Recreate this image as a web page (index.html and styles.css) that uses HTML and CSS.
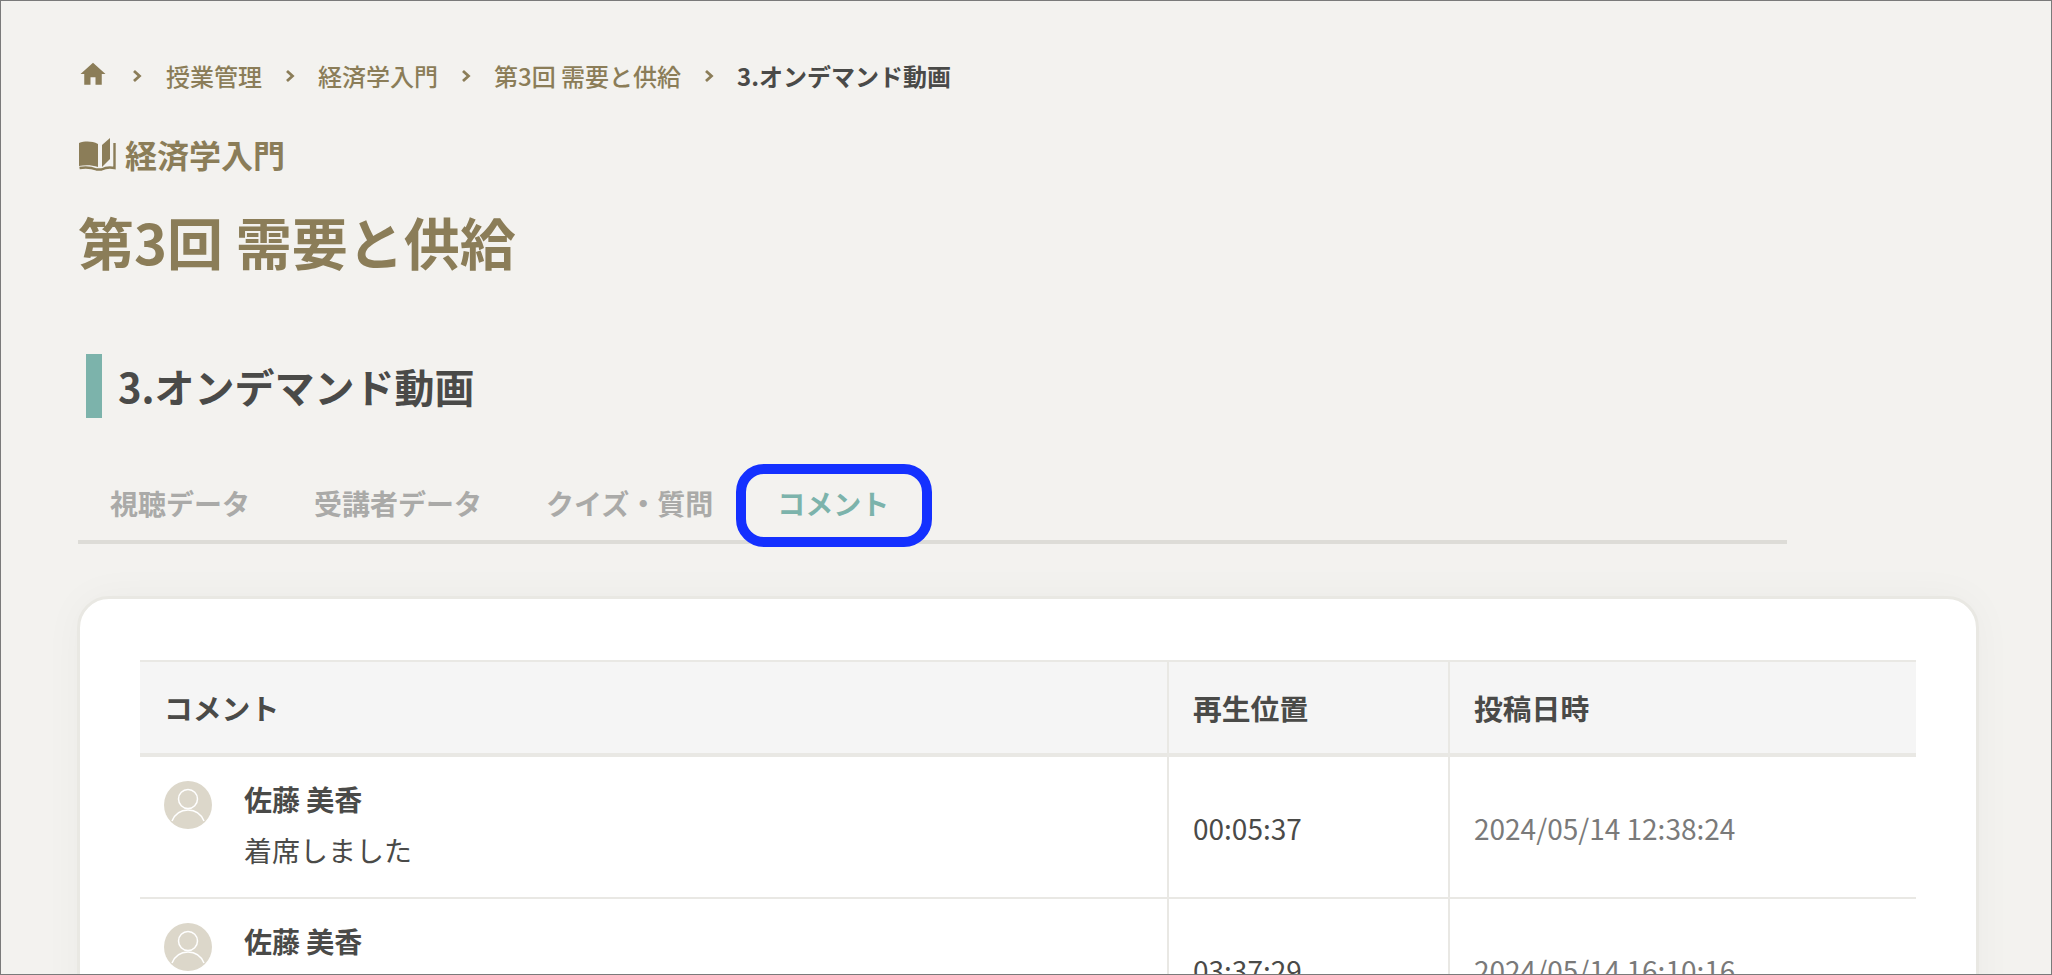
FILE: index.html
```html
<!DOCTYPE html>
<html lang="ja">
<head>
  <meta charset="utf-8">
  <title>3.オンデマンド動画 — コメント</title>
  <link rel="stylesheet" href="styles.css">
</head>

<body>
  <div class="page">
    <nav class="crumbs">
      <svg class="crumbs-home" viewBox="0 0 24 24"><path d="M10 20.500v-6h4v6h5v-8.500h3L12 3 2 12h3v8.500z"/></svg>
      <svg class="crumbs-sep crumbs-sep-first" viewBox="0 0 10 14"><path d="M2 2l5.500 5L2 12"/></svg>
      <a>授業管理</a>
      <svg class="crumbs-sep" viewBox="0 0 10 14"><path d="M2 2l5.500 5L2 12"/></svg>
      <a>経済学入門</a>
      <svg class="crumbs-sep" viewBox="0 0 10 14"><path d="M2 2l5.500 5L2 12"/></svg>
      <a>第3回 需要と供給</a>
      <svg class="crumbs-sep" viewBox="0 0 10 14"><path d="M2 2l5.500 5L2 12"/></svg>
      <span class="crumbs-current">3.オンデマンド動画</span>
    </nav>

    <div class="course">
      <svg class="course-icon" viewBox="0 0 38 34">
        <path d="M1 6c6-2 13-2 19 1v23c-6-2-13-2-19-1z"/>
        <path d="M24 8l8-7v21l-8 8z"/>
        <path class="course-icon-page" d="M36.500 6v25c-5-1-9-.500-13 1.500h-5c-5-2-11-2.500-17-1.500"/>
      </svg>
      <span>経済学入門</span>
    </div>
    <h1 class="lesson-title">第3回 需要と供給</h1>
    <h2 class="section-title">3.オンデマンド動画</h2>

    <ul class="tabs">
      <li>視聴データ</li>
      <li>受講者データ</li>
      <li>クイズ・質問</li>
      <li class="tab-active">コメント</li>
    </ul>

    <section class="card">
      <table class="comments">
        <thead>
          <tr>
            <th class="col-comment">コメント</th>
            <th class="col-pos">再生位置</th>
            <th class="col-date">投稿日時</th>
          </tr>
        </thead>
        <tbody>
          <tr>
            <td>
              <div class="comment">
                <svg class="avatar" viewBox="0 0 48 48"><circle cx="24" cy="24" r="24" class="avatar-bg"/><circle cx="24" cy="18" r="9.500"/><path d="M8 40c3-7 9-11 16-11s13 4 16 11"/></svg>
                <div>
                  <div class="comment-name">佐藤 美香</div>
                  <div class="comment-text">着席しました</div>
                </div>
              </div>
            </td>
            <td class="time">00:05:37</td>
            <td class="time date">2024/05/14 12:38:24</td>
          </tr>
          <tr>
            <td>
              <div class="comment">
                <svg class="avatar" viewBox="0 0 48 48"><circle cx="24" cy="24" r="24" class="avatar-bg"/><circle cx="24" cy="18" r="9.500"/><path d="M8 40c3-7 9-11 16-11s13 4 16 11"/></svg>
                <div>
                  <div class="comment-name">佐藤 美香</div>
                  <div class="comment-text">着席しました</div>
                </div>
              </div>
            </td>
            <td class="time">03:37:29</td>
            <td class="time date">2024/05/14 16:10:16</td>
          </tr>
        </tbody>
      </table>
    </section>
  </div>
</body>

</html>
```

FILE: styles.css
```css
html, body {
  margin: 0;
  height: 100%;
  overflow: hidden;
}

body {
  font-family: "Noto Sans CJK JP", "Noto Sans", sans-serif;
  color: #4a4a48;
  background: #f3f2ef;
}

.page {
  box-sizing: border-box;
  height: 975px;
  padding: 56px 74px 0 77px;
  border: 1px solid #7a7a7a;
  overflow: hidden;
}

.crumbs {
  display: flex;
  align-items: center;
  height: 36px;
  font-size: 24px;
  font-weight: 500;
  color: #8b7d58;
}

.crumbs-home {
  width: 30px;
  height: 30px;
  margin-top: -3px;
  fill: #8b7d58;
}

.crumbs-sep {
  width: 10px;
  height: 14px;
  margin: 2px 23px 0 23px;
  fill: none;
  stroke: #8b7d58;
  stroke-width: 2.800;
}

.crumbs-sep-first {
  margin: 2px 24px 0 24px;
}

.crumbs-current {
  font-weight: 700;
  color: #4a4a48;
}

.course {
  display: flex;
  align-items: center;
  gap: 9px;
  margin-top: 38px;
  font-size: 32px;
  font-weight: 700;
  line-height: 46px;
  color: #8b7d58;
}

.course-icon {
  width: 38px;
  height: 34px;
  fill: #8b7d58;
}

.course-icon-page {
  fill: none;
  stroke: #8b7d58;
  stroke-width: 2.400;
}

.lesson-title {
  margin: 24px 0 0;
  font-size: 56px;
  font-weight: 700;
  line-height: 80px;
  color: #8b7d58;
}

.section-title {
  margin: 73px 0 0 8px;
  padding-left: 16px;
  border-left: 16px solid #7cb3ab;
  font-size: 40px;
  font-weight: 700;
  line-height: 64px;
  color: #4a4a48;
}

.tabs {
  display: flex;
  width: 1709px;
  margin: 54px 0 0;
  padding: 0;
  list-style: none;
  border-bottom: 4px solid #dddcd7;
  font-size: 28px;
  font-weight: 700;
  color: #aaaaa8;
}

.tabs li {
  position: relative;
  padding: 8px 32px 14px;
  line-height: 46px;
}

.tab-active {
  color: #7cb3ab;
}

/* 注釈の青枠 */
.tab-active::after {
  content: "";
  position: absolute;
  left: -9px;
  right: -11px;
  top: -8px;
  bottom: -7px;
  border: 10px solid #1430ff;
  border-radius: 28px;
}

.card {
  box-sizing: border-box;
  width: 1902px;
  height: 600px;
  margin: 52px 0 0 -1px;
  padding: 61px 60px 0;
  background: #fff;
  border: 3px solid #e9e8e3;
  border-radius: 32px;
  box-shadow: 0 0 40px rgba(0, 0, 0, .035);
}

.comments {
  width: 1776px;
  table-layout: fixed;
  border-collapse: collapse;
  font-size: 28px;
}

.comments th, .comments td {
  padding: 0 24px;
  text-align: left;
  border-left: 2px solid #e9e8e4;
}

.comments th:first-child, .comments td:first-child {
  border-left: 0;
}

.comments th {
  height: 91px;
  background: #f5f5f5;
  font-size: 28.800px;
  font-weight: 700;
  border-top: 2px solid #e9e8e4;
  border-bottom: 4px solid #e9e8e4;
}

.comments td {
  height: 140px;
  font-weight: 400;
  border-bottom: 2px solid #e9e8e4;
}

.comments .time {
  height: 139px;
  padding-top: 1px;
}

.col-comment {
  width: 979px;
}

.col-pos {
  width: 231px;
}

.comments .date {
  color: #7a7a7a;
}

.comment {
  display: flex;
  gap: 32px;
  align-items: flex-start;
  padding-bottom: 4px;
}

.avatar {
  flex: none;
  width: 48px;
  height: 48px;
  margin-top: 1px;
  fill: #dcd7ca;
  stroke: #fff;
  stroke-width: 1.500;
}

.avatar-bg {
  stroke: none;
}

.comment-name {
  margin-top: -1px;
  font-weight: 700;
  line-height: 40px;
}

.comment-text {
  margin-top: 11px;
  line-height: 40px;
}
```
